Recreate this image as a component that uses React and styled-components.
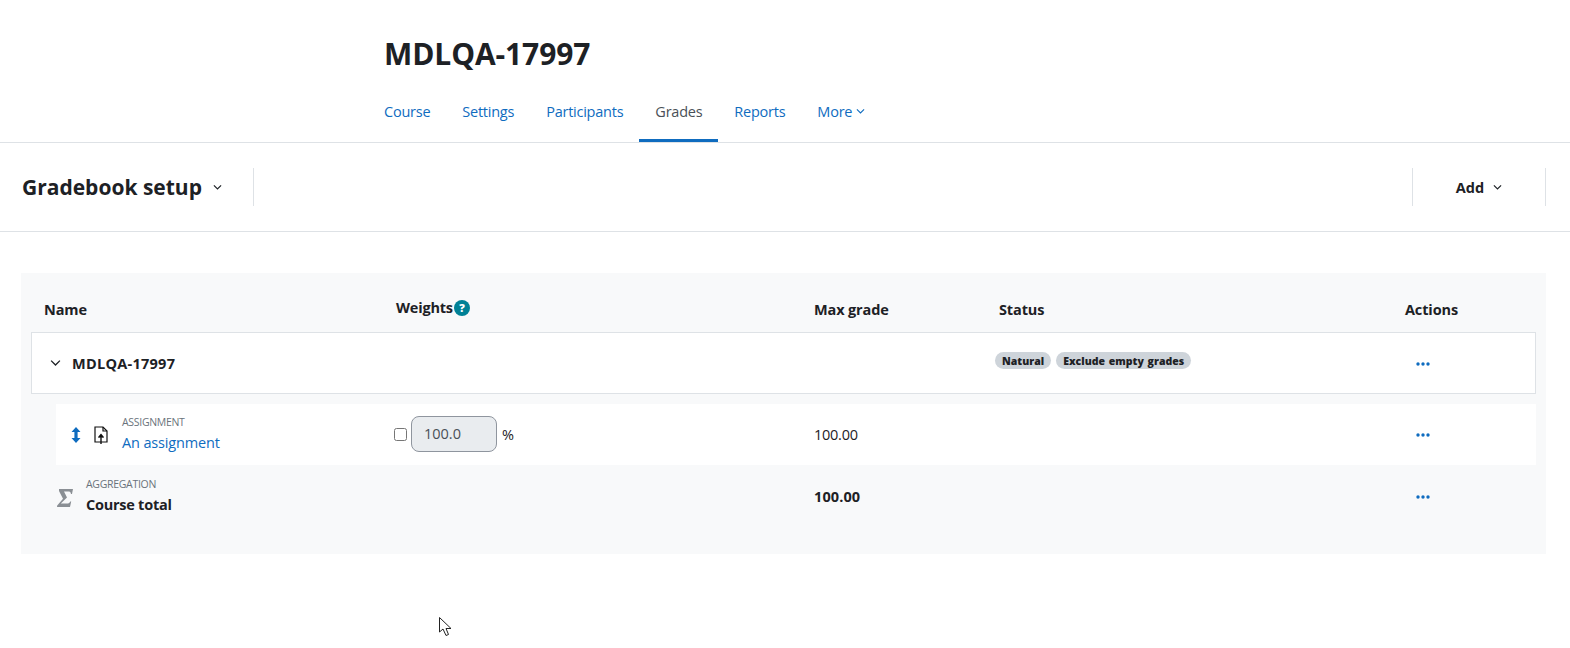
import React from "react";
import styled, { createGlobalStyle } from "styled-components";

const Global = createGlobalStyle`
  html, body { margin: 0; padding: 0; background: #fff; }
  body { font-family: "Open Sans", "Noto Sans", "Liberation Sans", sans-serif; color: #1d2125; font-size: 14.5px; }
`;
const Page = styled.div`position: relative; width: 1570px; height: 648px; overflow: hidden;`;
const Header = styled.header`padding: 36px 0 0 384px; height: 106px; box-sizing: content-box; border-bottom: 1px solid #dee2e6; display: flex; flex-direction: column;`;
const Title = styled.h1`margin: 0; font-size: 30px; line-height: 36px; font-weight: 700; letter-spacing: -0.1px; height: 56px;`;
const Tabs = styled.nav`display: flex; margin-left: -16px; height: 51px; flex: none;`;
const Tab = styled.a`
  display: flex; align-items: center; gap: 4px; padding: 0 16px 8px; height: 51px; box-sizing: border-box;
  color: ${p => (p.$active ? "#495057" : "#0f6cbf")};
  border-bottom: 3px solid ${p => (p.$active ? "#0f6cbf" : "transparent")};
  font-size: 14.5px; letter-spacing: -0.24px;
`;
const Tertiary = styled.div`height: 88px; border-bottom: 1px solid #dee2e6; display: flex; align-items: center; justify-content: space-between; padding: 0 24px 0 22px;`;
const Group = styled.div`display: flex; align-items: center; height: 38px;`;
const PageSelect = styled.div`display: flex; align-items: center; gap: 11px; padding-right: 31px; border-right: 1px solid #dee2e6; height: 38px; font-size: 21px; font-weight: 700;`;
const AddButton = styled.div`display: flex; align-items: center; justify-content: center; gap: 9px; width: 132px; height: 38px; border-left: 1px solid #dee2e6; border-right: 1px solid #dee2e6; font-size: 14.5px; font-weight: 700;`;
const Table = styled.section`margin: 41px 24px 0 21px; padding: 0 10px 26px; background: #f8f9fa; height: 255px; box-sizing: content-box;`;
const Dots = styled.div`padding-left: 11px; display: flex; align-items: center;`;
const Row = styled.div`
  display: grid; align-items: center; box-sizing: border-box;
  grid-template-columns: ${p => p.$first || 363}px 420px 185px 406px 1fr;
  height: ${p => p.$h || 61}px;
  margin-left: ${p => p.$indent || 0}px;
  background: ${p => p.$bg || "transparent"};
`;
const CategoryRow = styled(Row)`
  border: 1px solid #dee2e6; margin-bottom: 10px; background: #fff;
  grid-template-columns: 362px 420px 185px 406px 1fr;
  ${Dots} { padding-top: 2px; }
`;
const HeadCell = styled.div`font-weight: 700; font-size: 14.5px; letter-spacing: -0.13px; padding-top: 14px; padding-left: ${p => p.$left || 0}px;`;
const WeightHead = styled.div`display: flex; align-items: center; font-weight: 700; font-size: 14.5px; letter-spacing: -0.2px; padding-top: 9px; margin-left: 2px;`;
const Help = styled.span`display: inline-flex; align-items: center; justify-content: center; width: 16px; height: 16px; border-radius: 50%; background: #008196; color: #fff; font-size: 11px; font-weight: 800; margin: 1px 0 0 1px;`;
const NameCell = styled.div`display: flex; align-items: center; padding-left: ${p => p.$left || 0}px; gap: ${p => p.$gap || 0}px;`;
const CatName = styled.span`font-weight: 700; font-size: 14.5px; letter-spacing: 0.27px;`;
const Stack = styled.div`display: flex; flex-direction: column; padding-top: 2px; margin-left: ${p => p.$left || 0}px;`;
const Small = styled.span`font-size: 10.5px; line-height: 14px; color: #6a737b; letter-spacing: -0.3px;`;
const Link = styled.a`font-size: 14.5px; line-height: 28px; color: #0f6cbf; letter-spacing: -0.15px;`;
const Bold = styled.span`font-size: 14.5px; line-height: 28px; font-weight: 700; letter-spacing: -0.25px;`;
const Badges = styled.div`display: flex; gap: 5px; margin-left: -4px; margin-top: -5px;`;
const Badge = styled.span`background: #ced4da; border-radius: 9px; height: 17px; padding: 0 7px; display: flex; align-items: center; font-size: 10.5px; font-weight: 800; letter-spacing: 0.02px; word-spacing: 1px;`;
const WeightCell = styled.div`display: flex; align-items: center;`;
const Check = styled.span`width: 13px; height: 13px; box-sizing: border-box; border: 1px solid #767676; border-radius: 2.5px; background: #fff; margin-right: 4px;`;
const Input = styled.div`width: 86px; height: 36px; box-sizing: border-box; border: 1px solid #8f959e; border-radius: 8px; background: #e9ecef; color: #495057; font-size: 14.5px; display: flex; align-items: center; padding-left: 12px; margin: -2px 5px 0 0;`;
const Value = styled.span`font-size: 14.5px; letter-spacing: ${p => (p.$bold ? "0.1px" : "-0.25px")}; font-weight: ${p => (p.$bold ? 700 : 400)};`;
const SigmaIcon = styled.svg`margin-top: 3px; flex: none;`;
const Cursor = styled.svg`position: absolute; left: 439px; top: 617px;`;

const Chevron = ({ size = 10, color = "#1d2125", sw = 1.2 }) => (
  <svg width={size} height={size * 0.7} viewBox="0 0 10 7" fill="none">
    <path d="M1 1.5 L5 5.5 L9 1.5" stroke={color} strokeWidth={sw} />
  </svg>
);
const Ellipsis = () => (
  <svg width="14" height="4" viewBox="0 0 14 4" fill="#0f6cbf">
    <circle cx="2" cy="2" r="1.7" /><circle cx="7" cy="2" r="1.7" /><circle cx="12" cy="2" r="1.7" />
  </svg>
);
const Move = () => (
  <svg width="10" height="16" viewBox="0 0 10 16" fill="#0f6cbf">
    <path d="M5 0 L9.5 5 H6.6 V11 H9.5 L5 16 L0.5 11 H3.4 V5 H0.5 Z" />
  </svg>
);
const FileUp = () => (
  <svg width="14" height="18" viewBox="0 0 14 18" fill="none" stroke="#111" strokeWidth="1.2">
    <path d="M1 1 H9 L13 5 V16 H1 Z" />
    <path d="M9 1 V5 H13" />
    <path d="M7 18 V9" strokeWidth="1.4" />
    <path d="M4.5 11.5 L7 8.5 L9.5 11.5" fill="#111" />
  </svg>
);
const Sigma = () => (
  <SigmaIcon width="16" height="18" viewBox="0 0 16 18" fill="#8a8f94">
    <path d="M2 0 H16 L15 5 H14 C13.8 3 12.8 2.6 11 2.6 H7 L10 8.6 L3.8 14.6 H10 C11.8 14.6 12.6 14 13.2 12.6 H14.2 L13 18 H0 L0.2 16.6 L6 9.8 L2 2 Z" />
  </SigmaIcon>
);

export default function App() {
  return (
    <Page>
      <Global />
      <Header>
        <Title>MDLQA-17997</Title>
        <Tabs>
          <Tab>Course</Tab>
          <Tab>Settings</Tab>
          <Tab>Participants</Tab>
          <Tab $active>Grades</Tab>
          <Tab>Reports</Tab>
          <Tab>More <Chevron size={9} color="#0f6cbf" /></Tab>
        </Tabs>
      </Header>
      <Tertiary>
        <Group>
          <PageSelect>Gradebook setup <Chevron size={9} sw={1.3} /></PageSelect>
        </Group>
        <Group>
          <AddButton>Add <Chevron size={9} sw={1.3} /></AddButton>
        </Group>
      </Tertiary>
      <Table>
        <Row $h={59}>
          <HeadCell $left={13}>Name</HeadCell>
          <WeightHead>Weights<Help>?</Help></WeightHead>
          <HeadCell>Max grade</HeadCell>
          <HeadCell>Status</HeadCell>
          <HeadCell>Actions</HeadCell>
        </Row>
        <CategoryRow $h={62}>
          <NameCell $left={18} $gap={11}>
            <Chevron size={11} />
            <CatName>MDLQA-17997</CatName>
          </NameCell>
          <div />
          <div />
          <Badges>
            <Badge>Natural</Badge>
            <Badge>Exclude empty grades</Badge>
          </Badges>
          <Dots><Ellipsis /></Dots>
        </CategoryRow>
        <Row $indent={25} $first={338} $bg="#fff">
          <NameCell $left={15} $gap={13}>
            <Move />
            <FileUp />
            <Stack $left={1}>
              <Small>ASSIGNMENT</Small>
              <Link>An assignment</Link>
            </Stack>
          </NameCell>
          <WeightCell>
            <Check />
            <Input>100.0</Input>
            <span>%</span>
          </WeightCell>
          <Value>100.00</Value>
          <div />
          <Dots><Ellipsis /></Dots>
        </Row>
        <Row $h={63}>
          <NameCell $left={26} $gap={13}>
            <Sigma />
            <Stack>
              <Small>AGGREGATION</Small>
              <Bold>Course total</Bold>
            </Stack>
          </NameCell>
          <div />
          <Value $bold>100.00</Value>
          <div />
          <Dots><Ellipsis /></Dots>
        </Row>
      </Table>
      <Cursor width="14" height="20" viewBox="0 0 14 20">
        <path d="M0.5 0.5 V15 L4 12 L7 18.5 L9.5 17.5 L7 11.5 H12 Z" fill="#fff" stroke="#222" strokeWidth="1" />
      </Cursor>
    </Page>
  );
}
